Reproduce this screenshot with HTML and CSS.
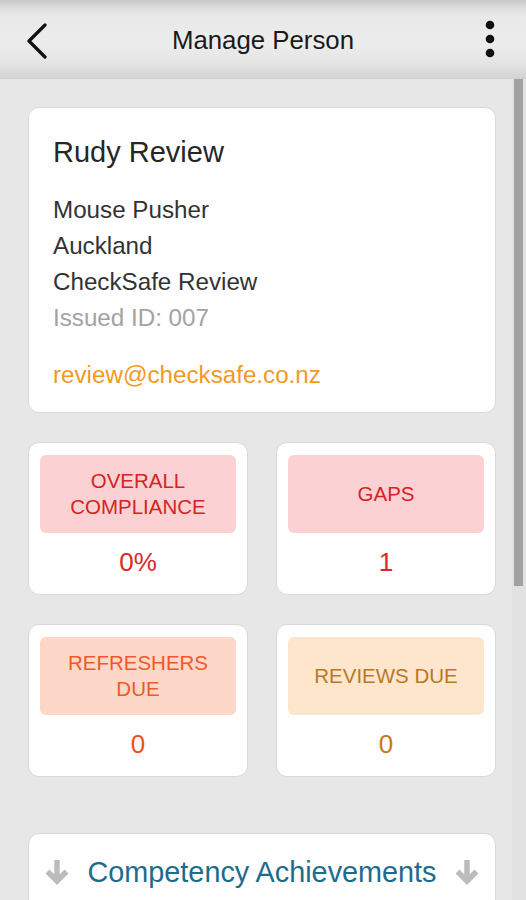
FILE: index.html
```html
<!DOCTYPE html>
<html>
<head>
<meta charset="utf-8">
<link rel="stylesheet" href="styles.css">
</head>
<body>
<header class="topbar">
  <div class="bar-left">
    <svg class="back" width="22" height="36" viewBox="0 0 22 36"><path d="M19 2 L3 18 L19 34" fill="none" stroke="#111" stroke-width="3.2" stroke-linecap="round" stroke-linejoin="round"/></svg>
  </div>
  <div class="title">Manage Person</div>
  <div class="bar-right">
    <svg class="kebab" width="12" height="40" viewBox="0 0 12 40"><circle cx="6" cy="6" r="4.3" fill="#111"/><circle cx="6" cy="20" r="4.3" fill="#111"/><circle cx="6" cy="34" r="4.3" fill="#111"/></svg>
  </div>
</header>
<main class="content">
  <section class="card person">
    <div class="name">Rudy Review</div>
    <div class="details">
      <div class="line">Mouse Pusher</div>
      <div class="line">Auckland</div>
      <div class="line">CheckSafe Review</div>
      <div class="line muted">Issued ID: 007</div>
    </div>
    <div class="email">review@checksafe.co.nz</div>
  </section>
  <section class="stats">
    <div class="card stat red">
      <div class="label">OVERALL<br>COMPLIANCE</div>
      <div class="value">0%</div>
    </div>
    <div class="card stat red">
      <div class="label">GAPS</div>
      <div class="value">1</div>
    </div>
    <div class="card stat orange">
      <div class="label">REFRESHERS<br>DUE</div>
      <div class="value">0</div>
    </div>
    <div class="card stat amber">
      <div class="label">REVIEWS DUE</div>
      <div class="value">0</div>
    </div>
  </section>
  <section class="card section">
    <div class="section-head">
      <svg class="arrow" width="24" height="26" viewBox="0 0 24 26"><path d="M12 1 V21" stroke="#bcbcbc" stroke-width="5.5" fill="none"/><path d="M2.5 12.5 L12 22 L21.5 12.5" stroke="#bcbcbc" stroke-width="5.5" fill="none" stroke-linejoin="miter"/></svg>
      <div class="section-title">Competency Achievements</div>
      <svg class="arrow" width="24" height="26" viewBox="0 0 24 26"><path d="M12 1 V21" stroke="#bcbcbc" stroke-width="5.5" fill="none"/><path d="M2.5 12.5 L12 22 L21.5 12.5" stroke="#bcbcbc" stroke-width="5.5" fill="none" stroke-linejoin="miter"/></svg>
    </div>
  </section>
</main>
<div class="scrolltrack"><div class="scrollthumb"></div></div>
</body>
</html>
```
FILE: styles.css
```css
html, body {
  margin: 0;
  padding: 0;
}
body {
  width: 526px;
  height: 900px;
  overflow: hidden;
  background: #e7e7e7;
  font-family: "Liberation Sans", Arial, Helvetica, sans-serif;
  color: #333;
}
.topbar {
  height: 79px;
  box-sizing: border-box;
  display: grid;
  grid-template-columns: 1fr auto 1fr;
  align-items: center;
  background: linear-gradient(#c9c9c9 0px, #dedede 8px, #e9e9e9 16px, #ececec 45px, #e4e4e4 64px, #d2d2d2 79px);
  border-bottom: 1px solid #d0d0d0;
}
.bar-left {
  display: flex;
  align-items: center;
  padding-left: 26px;
}
.back {
  display: block;
  margin-top: 3px;
}
.title {
  font-size: 25.8px;
  color: #1a1a1a;
  line-height: 30px;
  margin-top: 2px;
}
.bar-right {
  display: flex;
  justify-content: flex-end;
  padding-right: 30px;
}
.kebab {
  display: block;
}
.content {
  padding: 28px 30px 0 28px;
}
.card {
  background: #fefefe;
  border: 1px solid #d9d9d9;
  border-radius: 11px;
  box-sizing: border-box;
}
.person {
  height: 306px;
  padding: 26px 24px 0 24px;
}
.name {
  font-size: 29px;
  line-height: 36px;
  color: #262626;
}
.details {
  margin-top: 22px;
}
.line {
  font-size: 24.2px;
  line-height: 36px;
  color: #333;
}
.muted {
  color: #a3a3a3;
}
.email {
  margin-top: 21px;
  font-size: 24.2px;
  line-height: 36px;
  color: #f29a1f;
}
.stats {
  margin-top: 29px;
  display: grid;
  grid-template-columns: 1fr 1fr;
  column-gap: 28px;
  row-gap: 29px;
}
.stat {
  height: 153px;
  padding: 12px 11px 0 11px;
  display: flex;
  flex-direction: column;
}
.label {
  height: 78px;
  border-radius: 6px;
  display: flex;
  align-items: center;
  justify-content: center;
  text-align: center;
  font-size: 20.5px;
  line-height: 26px;
}
.value {
  margin-top: 13px;
  text-align: center;
  font-size: 26px;
  line-height: 32px;
}
.red .label {
  background: #fcd1d4;
  color: #d52323;
}
.red .value {
  color: #d82a2a;
}
.orange .label {
  background: #fdd8c8;
  color: #f0582a;
}
.orange .value {
  color: #ea5222;
}
.amber .label {
  background: #fde6cb;
  color: #b87828;
}
.amber .value {
  color: #c47a22;
}
.section {
  margin-top: 56px;
  height: 120px;
  padding: 20px 16px 0 16px;
}
.section-head {
  display: flex;
  align-items: center;
  justify-content: space-between;
}
.arrow {
  display: block;
}
.section-title {
  font-size: 28.8px;
  line-height: 36px;
  color: #1d6c8d;
}
.scrolltrack {
  position: absolute;
  top: 79px;
  right: 0;
  width: 14px;
  height: 821px;
  background: #e2e2e2;
}
.scrollthumb {
  margin-left: 2px;
  width: 9px;
  height: 507px;
  background: #a2a2a2;
}
```
